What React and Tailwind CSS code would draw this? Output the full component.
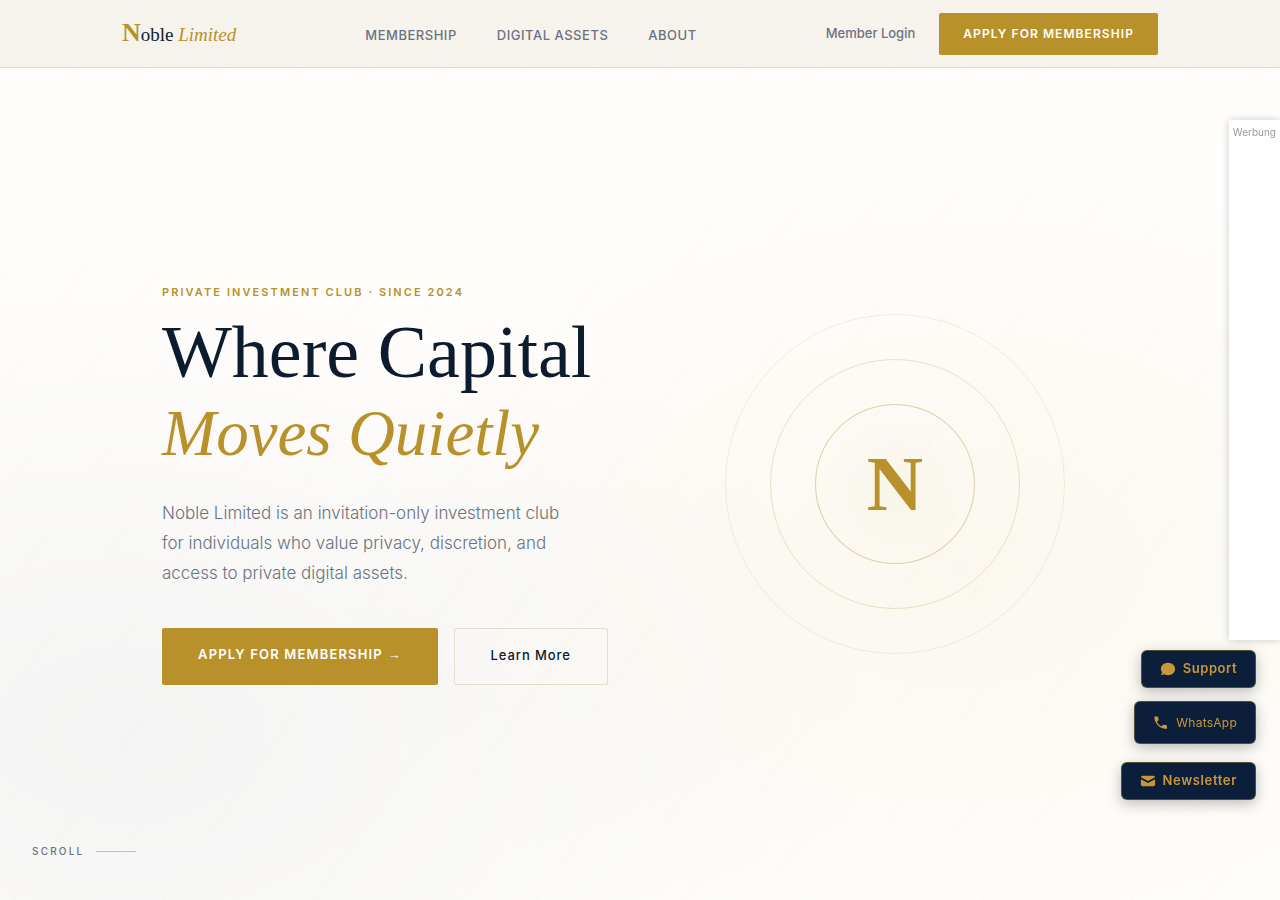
import React from 'react';

const navLinks = ['Membership', 'Digital Assets', 'About'];

const contactLinks = [
  {
    label: 'Support',
    className: 'h-[38px] text-[13px] font-semibold tracking-[0.04em] mb-[13px]',
    viewBox: '1 1 18 18',
    path: 'M18 10c0 3.866-3.582 7-8 7a8.841 8.841 0 01-4.083-.98L2 17l1.338-3.123C2.493 12.767 2 11.434 2 10c0-3.866 3.582-7 8-7s8 3.134 8 7z',
  },
  {
    label: 'WhatsApp',
    className: 'h-[43px] text-[12px] tracking-[0.02em] mb-[18px]',
    viewBox: '1 1 23 23',
    path: 'M6.62 10.79c1.44 2.83 3.76 5.14 6.59 6.59l2.2-2.2c.27-.27.67-.36 1.02-.24 1.12.37 2.33.57 3.57.57.55 0 1 .45 1 1V20c0 .55-.45 1-1 1-9.39 0-17-7.61-17-17 0-.55.45-1 1-1h3.5c.55 0 1 .45 1 1 0 1.25.2 2.45.57 3.57.11.35.03.74-.25 1.02l-2.2 2.2z',
  },
  {
    label: 'Newsletter',
    className: 'h-[38px] text-[13px] font-semibold tracking-[0.05em]',
    viewBox: '1 1 18 18',
    path: 'M2.003 5.884L10 9.882l7.997-3.998A2 2 0 0016 4H4a2 2 0 00-1.997 1.884zM18 8.118l-8 4-8-4V14a2 2 0 002 2h12a2 2 0 002-2V8.118z',
  },
];

function Header() {
  return (
    <header className="border-b border-[#e2ddd2] bg-[#f6f3ec]">
      <div className="mx-auto flex h-[67px] max-w-[1100px] items-center justify-between px-8">
        <a href="#" className="font-['Liberation_Serif',serif] text-[19px] leading-[30px] text-[#0d1b2e]">
          <span className="text-[26px] font-bold text-[#b8912a]">N</span>oble{' '}
          <em className="text-[#b8912a]">Limited</em>
        </a>
        <nav className="flex gap-10 pt-1">
          {navLinks.map((label) => (
            <a key={label} href="#" className="text-[13px] font-medium uppercase tracking-[0.04em] text-[#6b7280]">
              {label}
            </a>
          ))}
        </nav>
        <div className="flex items-center gap-6">
          <a href="#" className="text-[13px] font-medium text-[#6b7280]">
            Member Login
          </a>
          <button className="h-[42px] rounded-[2px] bg-[#b8912a] px-6 text-[12px] font-semibold uppercase tracking-[0.09em] text-white">
            Apply for Membership
          </button>
        </div>
      </div>
    </header>
  );
}

function Emblem() {
  return (
    <div className="flex justify-center">
      <div className="flex size-[340px] items-center justify-center rounded-full border border-[#b8912a]/15">
        <div className="flex size-[250px] items-center justify-center rounded-full border border-[#b8912a]/25">
          <div className="flex size-[160px] items-center justify-center rounded-full border border-[#b8912a]/40 bg-[radial-gradient(circle,rgba(184,145,42,0.04)_0%,transparent_65%)]">
            <span className="font-['Liberation_Serif',serif] text-[78px] leading-[80px] font-bold text-[#b8912a]">N</span>
          </div>
        </div>
      </div>
    </div>
  );
}

function Hero() {
  return (
    <main className="relative flex min-h-[calc(100vh-68px)] items-center justify-center bg-[repeating-linear-gradient(-55deg,transparent_0px,transparent_60px,rgba(184,145,42,0.03)_60px,rgba(184,145,42,0.03)_61px),radial-gradient(ellipse_50%_50%_at_75%_60%,rgba(184,145,42,0.06)_0%,transparent_100%),radial-gradient(ellipse_60%_60%_at_10%_80%,rgba(13,27,62,0.045)_0%,transparent_100%)]">
      <div className="grid w-full max-w-[956px] grid-cols-2 items-center gap-16">
        <div>
          <p className="text-[11px] leading-4 font-semibold uppercase tracking-[0.19em] text-[#b8912a]">
            Private Investment Club · Since 2024
          </p>
          <h1 className="mt-3 font-['Liberation_Serif',serif] text-[74px] leading-[81px] whitespace-nowrap text-[#0d1b2e]">
            Where Capital
            <em className="block text-[65px] text-[#b8912a]">Moves Quietly</em>
          </h1>
          <p className="mt-6 max-w-[420px] text-[17px] leading-[30px] font-light text-[#6b7280]">
            Noble Limited is an invitation-only investment club for individuals who value privacy, discretion, and
            access to private digital assets.
          </p>
          <div className="mt-10 flex gap-4">
            <button className="h-[57px] rounded-[2px] bg-[#b8912a] px-9 pb-0.5 text-[13px] font-semibold uppercase tracking-[0.09em] whitespace-nowrap text-white">
              Apply for Membership <span className="font-['Liberation_Sans',sans-serif] font-normal">→</span>
            </button>
            <button className="h-[57px] rounded-[2px] border border-[#e5dccb] px-9 text-[13px] font-medium tracking-[0.07em] whitespace-nowrap text-[#0d1b2e]">
              Learn More
            </button>
          </div>
        </div>
        <Emblem />
      </div>

      <div className="absolute bottom-10 left-8 flex items-center gap-3 text-[10px] leading-[18px] font-medium uppercase tracking-[0.22em] text-[#6b7280]">
        Scroll
        <span className="h-px w-10 bg-[#d8c08a]" />
      </div>
    </main>
  );
}

export default function App() {
  return (
    <div className="min-h-screen bg-[#fffefc] font-['Inter',sans-serif]">
      <Header />
      <Hero />

      <aside className="fixed top-[120px] right-0 h-[520px] bg-white px-1 pt-1 text-[10px] leading-[17px] text-[#999999] shadow-[0_0_8px_rgba(0,0,0,0.2)]">
        Werbung
      </aside>

      <div className="fixed right-6 bottom-[100px] flex flex-col items-end">
        {contactLinks.map(({ label, className, viewBox, path }) => (
          <a
            key={label}
            href="#"
            className={`flex items-center gap-[7px] rounded-md border border-[#c9973a]/40 bg-[#0b1f3a] px-[18px] text-[#c9973a] shadow-[0_4px_14px_rgba(0,0,0,0.25)] ${className}`}
          >
            <svg viewBox={viewBox} className="size-4" fill="currentColor" aria-hidden="true">
              <path d={path} />
            </svg>
            {label}
          </a>
        ))}
      </div>
    </div>
  );
}
